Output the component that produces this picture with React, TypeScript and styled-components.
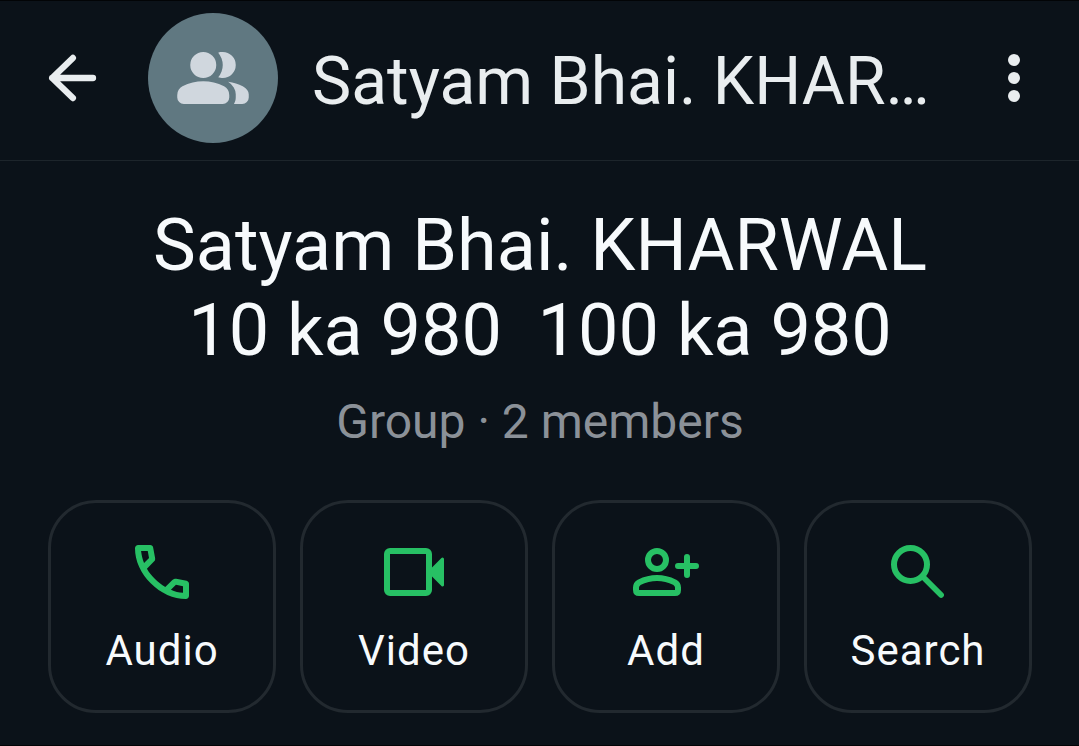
import React from "react";
import styled, { createGlobalStyle } from "styled-components";

const GlobalStyle = createGlobalStyle`
  * { box-sizing: border-box; }
  body {
    margin: 0;
    background: #0b1219;
    color: #f7fafc;
    font-family: Roboto, "Liberation Sans", sans-serif;
  }
`;

const Page = styled.div`
  min-height: 100vh;
  border-top: 1px solid #020406;
  border-bottom: 1px solid #020406;
`;

const TopBar = styled.header`
  display: flex;
  align-items: center;
  height: 160px;
  padding: 0 29px 6px 36px;
  border-bottom: 1px solid #1d252b;
`;

const IconButton = styled.button`
  flex: none;
  display: flex;
  padding: 0;
  border: 0;
  background: none;
  color: #e9edef;
  cursor: pointer;
`;

const Icon = styled.svg<{ $size?: number }>`
  display: block;
  width: ${({ $size = 72 }) => $size}px;
  height: ${({ $size = 72 }) => $size}px;
  fill: currentColor;
`;

const Avatar = styled.div`
  flex: none;
  display: flex;
  align-items: center;
  justify-content: center;
  width: 130px;
  height: 130px;
  margin: 0 34px 0 40px;
  border-radius: 50%;
  background: #607881;
  color: #d0d7de;
`;

const BarTitle = styled.div`
  flex: 1;
  min-width: 0;
  margin-right: 40px;
  padding-top: 8px;
  color: #e9edef;
  font-size: 66px;
  line-height: 80px;
  white-space: nowrap;
  overflow: hidden;
  text-overflow: ellipsis;
`;

const Main = styled.main`
  padding: 42px 47px 32px 48px;
`;

const GroupName = styled.h1`
  margin: 0;
  padding: 0 72px;
  font-size: 72px;
  line-height: 85px;
  font-weight: 400;
  text-align: center;
`;

const GroupInfo = styled.p`
  margin: 21px 0 50px;
  color: #8b9198;
  font-size: 48px;
  line-height: 56px;
  text-align: center;
`;

const Actions = styled.div`
  display: grid;
  grid-template-columns: repeat(4, 1fr);
  gap: 24px;
`;

const ActionButton = styled.button`
  display: flex;
  flex-direction: column;
  align-items: center;
  gap: 17px;
  padding: 33px 0;
  border: 3px solid #22292f;
  border-radius: 48px;
  background: none;
  color: #f7fafc;
  font-family: inherit;
  font-size: 42px;
  line-height: 52px;
  letter-spacing: 1px;
  cursor: pointer;

  ${Icon} {
    color: #27c064;
  }
`;

const name = "Satyam Bhai. KHARWAL 10 ka 980\u00a0 100 ka 980";

const BackIcon = () => (
  <Icon viewBox="0 0 24 24" aria-hidden="true">
    <path
      d="M19 12H5.4M12.3 5.3 5.4 12l6.9 6.7"
      fill="none"
      stroke="currentColor"
      strokeWidth="2.1"
      strokeLinecap="round"
      strokeLinejoin="round"
    />
  </Icon>
);

const MoreIcon = () => (
  <Icon viewBox="0 0 24 24" aria-hidden="true">
    <circle cx="12" cy="6" r="2" />
    <circle cx="12" cy="12" r="2" />
    <circle cx="12" cy="18" r="2" />
  </Icon>
);

const GroupIcon = () => (
  <Icon $size={78} viewBox="0 0 24 24" aria-hidden="true">
    <path d="M1 17.2q0-.85.438-1.562T2.6 14.55q1.55-.775 3.15-1.162T9 13t3.25.388 3.15 1.162q.725.375 1.163 1.088T17 17.2v.8q0 .825-.587 1.413T15 20H3q-.825 0-1.412-.587T1 18zM18.45 20q.275-.45.413-.962T19 18v-1q0-1.1-.612-2.113T16.65 13.15q1.275.15 2.4.513t2.1.887q.9.5 1.375 1.112T23 17v1q0 .825-.587 1.413T21 20zM9 12q-1.65 0-2.825-1.175T5 8t1.175-2.825T9 4t2.825 1.175T13 8t-1.175 2.825T9 12m10-4q0 1.65-1.175 2.825T15 12q-.275 0-.7-.062t-.7-.138q.675-.8 1.038-1.775T15 8t-.362-2.025T13.6 4.2q.35-.125.7-.163T15 4q1.65 0 2.825 1.175T19 8" />
  </Icon>
);

const PhoneIcon = () => (
  <Icon viewBox="0 0 24 24" aria-hidden="true">
    <path d="M19.95 21c-2.083 0-4.142-.454-6.175-1.363-2.033-.908-3.883-2.195-5.55-3.862-1.667-1.667-2.954-3.517-3.862-5.55C3.454 8.192 3 6.133 3 4.05c0-.3.1-.55.3-.75.2-.2.45-.3.75-.3H8.1c.233 0 .442.08.625.238.183.158.292.345.325.562l.65 3.5c.033.267.025.492-.025.675-.05.183-.142.342-.275.475L6.975 10.9c.333.617.73 1.213 1.188 1.787.458.575.962 1.13 1.512 1.663.517.517 1.058.996 1.625 1.438.567.441 1.167.845 1.8 1.212l2.35-2.35c.15-.15.346-.262.588-.337.241-.075.479-.096.712-.063l3.45.7c.233.067.425.188.575.363.15.175.225.37.225.587v4.05c0 .3-.1.55-.3.75-.2.2-.45.3-.75.3zM6.025 9l1.65-1.65L7.25 5H5.025c.083.683.2 1.358.35 2.025.15.667.367 1.325.65 1.975zm8.95 8.95c.65.283 1.313.508 1.987.675.676.167 1.355.275 2.038.325v-2.2l-2.35-.475z" />
  </Icon>
);

const VideoIcon = () => (
  <Icon viewBox="0 0 24 24" aria-hidden="true">
    <path d="M4 20q-.825 0-1.412-.587T2 18V6q0-.825.588-1.412T4 4h12q.825 0 1.413.588T18 6v4.5l3.15-3.15q.25-.25.55-.125t.3.475v8.6q0 .35-.3.475t-.55-.125L18 13.5V18q0 .825-.587 1.413T16 20zm0-2h12V6H4z" />
  </Icon>
);

const AddIcon = () => (
  <Icon viewBox="0 0 24 24" aria-hidden="true">
    <g
      fill="none"
      stroke="currentColor"
      strokeWidth="2"
      strokeLinecap="round"
      strokeLinejoin="round"
    >
      <circle cx="9" cy="8" r="3" />
      <path d="M3 19h12q1 0 1-1v-.8q0-1.15-1.05-1.75Q12 14 9 14t-5.95 1.45Q2 16.05 2 17.2v.8q0 1 1 1z" />
      <path d="M19 7v6M16 10h6" />
    </g>
  </Icon>
);

const SearchIcon = () => (
  <Icon viewBox="0 0 24 24" aria-hidden="true">
    <g fill="none" stroke="currentColor" strokeLinecap="round">
      <circle cx="9.5" cy="9.5" r="5.5" strokeWidth="2" />
      <path d="m13.7 13.7 6 6" strokeWidth="1.9" />
    </g>
  </Icon>
);

const actions = [
  { label: "Audio", Glyph: PhoneIcon },
  { label: "Video", Glyph: VideoIcon },
  { label: "Add", Glyph: AddIcon },
  { label: "Search", Glyph: SearchIcon },
];

export default function App() {
  return (
    <Page>
      <GlobalStyle />
      <TopBar>
        <IconButton type="button" aria-label="Back">
          <BackIcon />
        </IconButton>
        <Avatar>
          <GroupIcon />
        </Avatar>
        <BarTitle>{name}</BarTitle>
        <IconButton type="button" aria-label="More options">
          <MoreIcon />
        </IconButton>
      </TopBar>
      <Main>
        <GroupName>{name}</GroupName>
        <GroupInfo>Group · 2 members</GroupInfo>
        <Actions>
          {actions.map(({ label, Glyph }) => (
            <ActionButton key={label} type="button">
              <Glyph />
              {label}
            </ActionButton>
          ))}
        </Actions>
      </Main>
    </Page>
  );
}
